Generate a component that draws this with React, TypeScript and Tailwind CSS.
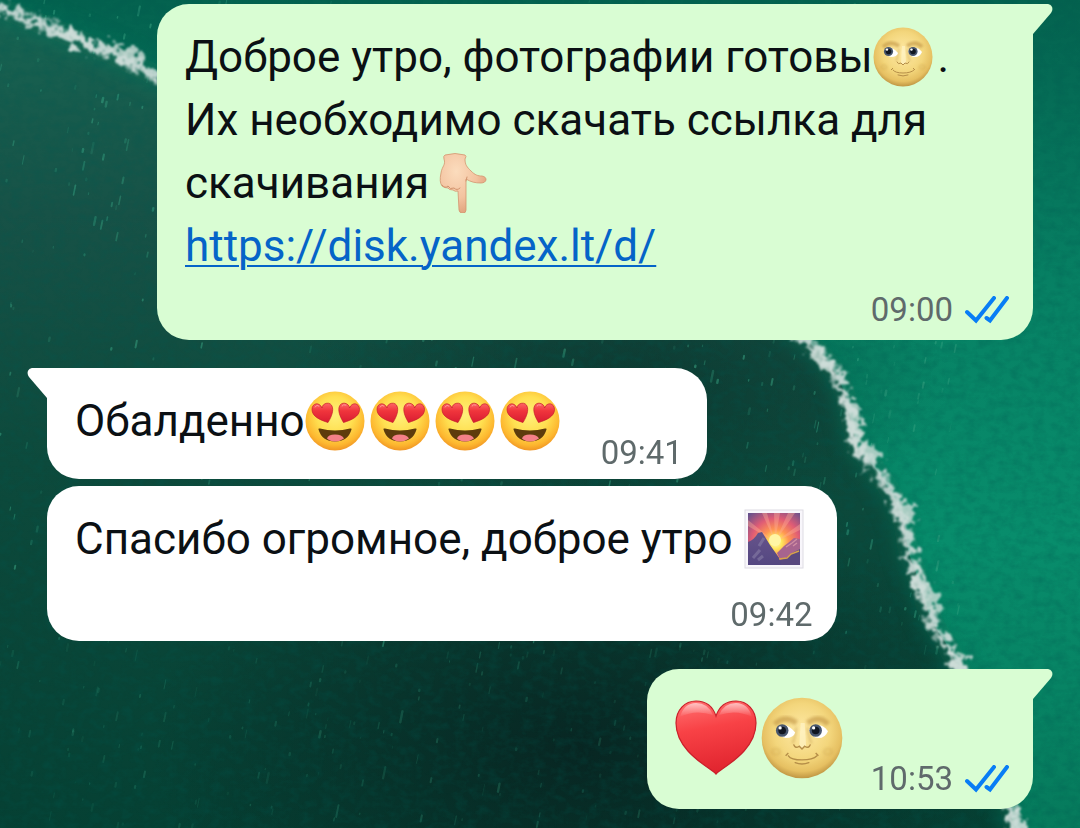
import type { ReactNode } from "react";
import { clsx } from "clsx";

const LINE =
  "M-10 4 C20 16 50 26 75 38 S120 56 160 78 C380 170 640 200 804 338 Q838 366 846 398 T857 448 C872 462 890 486 901 514 C908 530 904 546 914 566 C924 600 930 622 944 640 L962 672 C990 730 1006 780 1016 840";

// small deterministic generator for the chalk dust
function makeSpecks(count: number) {
  let seed = 17;
  const next = () => {
    seed = (seed * 16807) % 2147483647;
    return seed / 2147483647;
  };

  return Array.from({ length: count }, () => {
    const y = next() * 828;

    return {
      x: next() * 960,
      y,
      len: 1 + next() * next() * 11,
      width: 1 + next() * 1.5,
      opacity: (0.15 + next() * 0.4) * (y > 640 ? 0.5 : 1),
    };
  });
}

const SPECKS = makeSpecks(900);

function Wallpaper() {
  return (
    <svg
      className="absolute inset-0 h-full w-full"
      viewBox="0 0 1080 828"
      preserveAspectRatio="xMidYMid slice"
      aria-hidden="true"
    >
      <defs>
        <linearGradient id="bright" x1="0" y1="0" x2="0" y2="1">
          <stop offset="0" stopColor="#04624f" />
          <stop offset="0.35" stopColor="#078164" />
          <stop offset="0.65" stopColor="#088d6c" />
          <stop offset="1" stopColor="#067a5c" />
        </linearGradient>
        <linearGradient id="dark" x1="0" y1="0" x2="0" y2="1">
          <stop offset="0" stopColor="#176553" />
          <stop offset="0.25" stopColor="#175247" />
          <stop offset="0.55" stopColor="#0d4a3c" />
          <stop offset="1" stopColor="#054033" />
        </linearGradient>
        <radialGradient id="shade">
          <stop offset="0" stopColor="#08211f" stopOpacity="0.85" />
          <stop offset="1" stopColor="#08211f" stopOpacity="0" />
        </radialGradient>
        <filter id="grain" x="0" y="0" width="100%" height="100%">
          <feTurbulence type="fractalNoise" baseFrequency="0.09 0.13" numOctaves="4" seed="3" />
          <feColorMatrix values="0 0 0 0 0  0 0 0 0 0.1  0 0 0 0 0.08  1.6 0 0 0 -0.62" />
        </filter>
        <filter id="glow" x="-10%" y="-10%" width="120%" height="120%">
          <feGaussianBlur stdDeviation="9" />
        </filter>
        <filter id="dust" x="0" y="0" width="100%" height="100%">
          <feGaussianBlur stdDeviation="0.7" />
        </filter>
        <filter id="rough" filterUnits="userSpaceOnUse" x="-20" y="-20" width="1120" height="868">
          <feTurbulence type="fractalNoise" baseFrequency="0.13" numOctaves="4" seed="8" result="n" />
          <feDisplacementMap in="SourceGraphic" in2="n" scale="26" xChannelSelector="R" yChannelSelector="G" />
          <feGaussianBlur stdDeviation="0.8" />
        </filter>
      </defs>

      <rect width="1080" height="828" fill="url(#bright)" />
      <path d={`${LINE} L-10 840Z`} fill="url(#dark)" />
      <ellipse cx="580" cy="750" rx="430" ry="270" fill="url(#shade)" />
      <ellipse cx="620" cy="380" rx="330" ry="160" fill="url(#shade)" opacity="0.5" />
      <path d={LINE} fill="none" stroke="#07775c" strokeWidth="22" opacity="0.5" filter="url(#glow)" />

      <g stroke="#3aa584" strokeLinecap="round" filter="url(#dust)">
        {SPECKS.map((s, i) => (
          <path
            key={i}
            d={`M${s.x} ${s.y}l${-s.len / 5} ${s.len}`}
            strokeWidth={s.width}
            opacity={s.opacity}
          />
        ))}
      </g>

      <rect width="1080" height="828" filter="url(#grain)" opacity="0.35" />

      <g filter="url(#rough)" fill="none" stroke="#cfdeda" strokeLinecap="round">
        <path d={LINE} strokeWidth="6" opacity="0.85" />
        <path d={LINE} strokeWidth="13" strokeDasharray="2 9 4 14" opacity="0.5" />
        <path
          d="M66 34l22 10M112 49l24 10M816 354l12 14M851 405l5 28M858 449l16 5M905 506l4 14M918 575l5 16M928 592l8 14M956 656l4 12M1014 816l4 18"
          strokeWidth="13"
          opacity="0.8"
        />
      </g>
    </svg>
  );
}

function Emoji({
  label,
  viewBox = "0 0 60 60",
  large,
  children,
}: {
  label: string;
  viewBox?: string;
  large?: boolean;
  children: ReactNode;
}) {
  return (
    <span
      className={clsx(
        "inline-flex align-middle",
        large ? "w-[86px]" : "-mt-2 -mb-0.5 w-[65px]"
      )}
    >
      <svg
        role="img"
        aria-label={label}
        viewBox={viewBox}
        className={large ? "size-[82px]" : "size-[60px]"}
      >
        {children}
      </svg>
    </span>
  );
}

function Moon({ large }: { large?: boolean }) {
  return (
    <Emoji label="🌝" large={large}>
      <defs>
        <radialGradient id="moon" cx="0.5" cy="0.42" r="0.58">
          <stop offset="0" stopColor="#ffeaa6" />
          <stop offset="0.6" stopColor="#f3d67c" />
          <stop offset="0.85" stopColor="#e6c062" />
          <stop offset="1" stopColor="#c09643" />
        </radialGradient>
        <filter id="soft">
          <feGaussianBlur stdDeviation="1.3" />
        </filter>
      </defs>
      <circle cx="30" cy="30" r="29.5" fill="url(#moon)" />
      <g filter="url(#soft)" fill="none" stroke="#b98b3a">
        <path d="M10 20q7-7 16-1M34 19q9-6 15 1" strokeWidth="4" opacity="0.55" />
        <path d="M26 22q-1 8-3 12M34 22q1 8 3 12" strokeWidth="1.5" opacity="0.45" />
        <ellipse cx="11" cy="40" rx="3" ry="2" opacity="0.4" />
        <ellipse cx="49" cy="40" rx="3" ry="2" opacity="0.4" />
      </g>
      <path d="M29 19h3l1 17q-3 3-5 0z" fill="#fff5ca" opacity="0.65" />
      <path d="M11 24q6-8 14 2-1 4-7 4-5-1-7-6z" fill="#fff" />
      <path d="M35 24q8-7 14 1-2 5-7 5-5 0-7-6z" fill="#fff" />
      <circle cx="15.500" cy="24.5" r="4.6" fill="#48566d" />
      <circle cx="40" cy="24.5" r="4.6" fill="#48566d" />
      <circle cx="15.500" cy="24.5" r="2.800" fill="#111722" />
      <circle cx="40" cy="24.5" r="2.800" fill="#111722" />
      <circle cx="14" cy="22.6" r="1.2" fill="#fff" />
      <circle cx="38.500" cy="22.6" r="1.2" fill="#fff" />
      <path
        d="M24 35q1 3 4 1l2 2 2-2q3 2 4-1M20 43q2 3 10 3t11-3M25 48q5 2 10 0"
        fill="none"
        stroke="#b58e48"
        strokeWidth="1"
        strokeLinecap="round"
      />
      <path d="M18 43l2-2M40 41l2 2" stroke="#b58e48" />
    </Emoji>
  );
}

const EYE =
  "M23 31.5C15 29 7 25.500 7 18.500 7 12 14.500 10.500 17 17 17 12 26 9.500 27.500 16.500 28.500 22 25 28 23 31.500Z";

function HeartEyes() {
  return (
    <Emoji label="😍">
      <defs>
        <radialGradient id="face" cx="0.5" cy="0.4" r="0.62">
          <stop offset="0" stopColor="#fff07a" />
          <stop offset="0.5" stopColor="#ffdf50" />
          <stop offset="0.82" stopColor="#fdb72f" />
          <stop offset="1" stopColor="#ee8f22" />
        </radialGradient>
        <linearGradient id="eye" x1="0" y1="0" x2="0" y2="1">
          <stop offset="0" stopColor="#ff6666" />
          <stop offset="0.4" stopColor="#f0353c" />
          <stop offset="1" stopColor="#d91c32" />
        </linearGradient>
      </defs>
      <circle cx="30" cy="30" r="29.5" fill="url(#face)" />
      <path d="M13.500 38.500q-.5-1.500 1.500-1 15 4 30 0 2-.5 1.500 1Q43 50.500 30 50.500T13.500 38.500z" fill="#5e3c0c" />
      <path d="M22 47.500q1-4 8-4t9 4q-4 3-9 3t-8-3z" fill="#f58088" />
      <path d={EYE} fill="url(#eye)" stroke="#c41b2b" strokeWidth="0.7" />
      <path
        d={EYE}
        transform="translate(61.500 0) scale(-1 1)"
        fill="url(#eye)"
        stroke="#c41b2b"
        strokeWidth="0.7"
      />
      <path d="M10 16q2-3 4-1M37 15q1-2 4-1" fill="none" stroke="#ff9a98" strokeLinecap="round" />
    </Emoji>
  );
}

function PointDown() {
  return (
    <Emoji label="👇🏼">
      <defs>
        <radialGradient id="hand" cx="0.35" cy="0.3" r="0.75">
          <stop offset="0" stopColor="#fbdcbd" />
          <stop offset="0.6" stopColor="#f3c3a0" />
          <stop offset="1" stopColor="#dfa07a" />
        </radialGradient>
      </defs>
      <g transform="translate(4 0)">
        <path
          d="M12 2Q22-1 32 2 34 3 32 6C32 12 34 14 38 18c4 4 7 5 11 5 6 1 5 7-1 7-6 0-10-1-15-4L33 57q0 3-3 3-4 0-4-3l-1-19q-3 1-5-1-4 0-5-2-4 0-6-2-3-4-1-13C9 13 13 12 11 6q-1-3 1-4z"
          fill="url(#hand)"
          stroke="#d3946f"
          strokeWidth="0.8"
        />
        <path
          d="M9 32q3 4 6 1 2 4 6 2 3 3 6 0M33 28l1-4"
          fill="none"
          stroke="#d2936d"
          strokeLinecap="round"
        />
      </g>
    </Emoji>
  );
}

function Sunrise() {
  return (
    <Emoji label="🌄">
      <defs>
        <radialGradient id="sky" cx="0.53" cy="0.57" r="0.75">
          <stop offset="0" stopColor="#fffbd0" />
          <stop offset="0.16" stopColor="#ffe75b" />
          <stop offset="0.34" stopColor="#ff9552" />
          <stop offset="0.62" stopColor="#e05c75" />
          <stop offset="1" stopColor="#64508c" />
        </radialGradient>
        <linearGradient id="peak" x1="0" y1="0" x2="0" y2="1">
          <stop offset="0" stopColor="#66548b" />
          <stop offset="1" stopColor="#544781" />
        </linearGradient>
      </defs>
      <rect x="1" y="1" width="58" height="58" fill="#f8f6fb" stroke="#dedce3" />
      <rect x="4" y="4" width="52" height="52" fill="url(#sky)" />
      <path
        d="M31 33L18 4h5zM31 33L30 4h6zM31 33L44 4h7zM31 33L56 15v6zM31 33L4 11v6z"
        fill="#ffb096"
        opacity="0.4"
      />
      <circle cx="31" cy="31" r="6" fill="#fff6a4" />
      <path d="M4 33Q10 31 14 24L18 23 26 36 31 43 40 56H4z" fill="url(#peak)" />
      <path d="M33 44L40 37 44 34 50 29 56 30V56H39z" fill="#a7648e" />
      <path d="M36 51l6-2 8-6 6-3v16H37z" fill="#59497f" />
      <path d="M35 50l8-1 4-4 8-3" fill="none" stroke="#d9a449" strokeWidth="1.4" />
      <path d="M9 49l7-8M15 37l5-8M14 51l5-4" stroke="#877da6" strokeWidth="3" opacity="0.6" />
      <path d="M42 38l6-4 5-4M49 37l4-3" fill="none" stroke="#d08da2" strokeWidth="1.4" />
    </Emoji>
  );
}

function Heart() {
  return (
    <Emoji label="❤️" large viewBox="0 0 82 82">
      <defs>
        <linearGradient id="heart" x1="0.4" y1="0" x2="0.6" y2="1">
          <stop offset="0" stopColor="#ff6b6b" />
          <stop offset="0.35" stopColor="#f84246" />
          <stop offset="1" stopColor="#df222d" />
        </linearGradient>
        <linearGradient id="shine" x1="0" y1="0" x2="0" y2="1">
          <stop offset="0" stopColor="#fff" stopOpacity="0.6" />
          <stop offset="1" stopColor="#fff" stopOpacity="0" />
        </linearGradient>
      </defs>
      <path
        d="M41 77C36 71 1 55 1 26 1 13 10 4 21 4c10 0 17 6 20 15C44 10 51 4 61 4c11 0 20 9 20 22 0 29-35 45-40 51z"
        fill="url(#heart)"
        stroke="#ca202b"
        strokeWidth="1.2"
      />
      <path d="M5 20Q9 6 21 6q12 0 17 12Q20 12 5 20zM77 20Q73 6 61 6 49 6 44 18q18-6 33 2z" fill="url(#shine)" />
    </Emoji>
  );
}

function Ticks() {
  return (
    <svg
      viewBox="0 0 44 28"
      className="h-7 w-11"
      fill="none"
      stroke="#087df5"
      strokeWidth="4"
      strokeLinecap="round"
      role="img"
      aria-label="Прочитано"
    >
      <path d="M2 16l9 8.500L29 2M21.500 22l3.500 2.500L42 2" />
    </svg>
  );
}

function Bubble({
  outgoing,
  tail,
  className,
  children,
}: {
  outgoing?: boolean;
  tail?: boolean;
  className?: string;
  children: ReactNode;
}) {
  return (
    <article
      className={clsx(
        "relative max-w-[876px] rounded-[32px] px-7",
        outgoing ? "self-end bg-[#d9fdd3]" : "self-start bg-white",
        tail && (outgoing ? "rounded-tr-none" : "rounded-tl-none"),
        className
      )}
    >
      {tail && (
        <svg
          viewBox="0 0 20 31"
          className={clsx(
            "absolute top-0 h-[31px] w-5",
            outgoing ? "left-full fill-[#d9fdd3]" : "right-full -scale-x-100 fill-white"
          )}
          aria-hidden="true"
        >
          <path d="M-1 0H14C19 0 21 5 18 9L0 30H-1z" />
        </svg>
      )}
      {children}
    </article>
  );
}

function Meta({ time, read }: { time: string; read?: boolean }) {
  return (
    <div className="-mr-1 flex items-center justify-end gap-3 text-[33px] leading-10 text-[#5f6a6b]">
      <time>{time}</time>
      {read && <Ticks />}
    </div>
  );
}

export default function App() {
  return (
    <div className="relative min-h-screen overflow-hidden bg-[#0b4638] font-[Roboto,sans-serif] text-[44px] leading-[63px] text-[#0b1014]">
      <Wallpaper />

      <main className="relative flex flex-col px-[47px] pt-1 pb-4">
        <Bubble outgoing tail className="pt-[22px] pb-2.5">
          <p>
            Доброе утро, фотографии готовы
            <Moon />. Их необходимо скачать ссылка для скачивания
            <PointDown />
            <br />
            <a
              href="https://disk.yandex.lt/d/"
              className="text-[#0564c8] underline decoration-2 underline-offset-4"
            >
              https://disk.yandex.lt/d/
            </a>
          </p>
          <div className="pt-3">
            <Meta time="09:00" read />
          </div>
        </Bubble>

        <Bubble tail className="mt-7 flex items-end gap-9 pt-[22px] pb-[6px]">
          <p className="pb-5">
            Обалденно
            <HeartEyes />
            <HeartEyes />
            <HeartEyes />
            <HeartEyes />
          </p>
          <Meta time="09:41" />
        </Bubble>

        <Bubble className="mt-[7px] pt-[22px] pb-[6px]">
          <p>
            Спасибо огромное, доброе утро <Sunrise />
          </p>
          <div className="pt-6">
            <Meta time="09:42" />
          </div>
        </Bubble>

        <Bubble outgoing tail className="mt-7 flex items-end gap-6 pt-7 pb-2.5">
          <p className="flex pb-5">
            <Heart />
            <Moon large />
          </p>
          <Meta time="10:53" read />
        </Bubble>
      </main>
    </div>
  );
}
